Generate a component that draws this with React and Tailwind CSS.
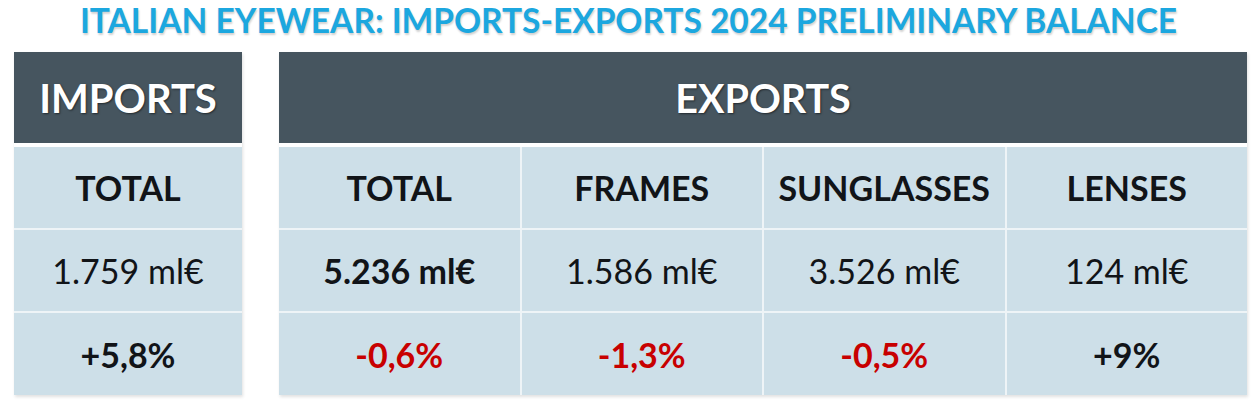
const FONT = { fontFamily: "Lato, 'Noto Sans', sans-serif" };

const CELL = "flex items-center justify-center bg-[#cddfe8] text-[#111418]";

function Cell({ children, className = "" }) {
  return <div className={`${CELL} ${className}`}>{children}</div>;
}

const exportsCols = [
  { label: "TOTAL", value: "5.236 ml€", strong: true, change: "-0,6%", down: true },
  { label: "FRAMES", value: "1.586 ml€", change: "-1,3%", down: true },
  { label: "SUNGLASSES", value: "3.526 ml€", change: "-0,5%", down: true },
  { label: "LENSES", value: "124 ml€", change: "+9%", down: false },
];

export default function App() {
  return (
    <div className="h-[405px] w-[1257px] bg-white" style={FONT}>
      <h1 className="h-[40px] pt-[1px] text-center text-[33.5px] font-bold leading-[38px] text-[#1ca7df] [text-shadow:1px_2px_2px_rgba(0,0,0,0.18)]">
        ITALIAN EYEWEAR: IMPORTS-EXPORTS 2024 PRELIMINARY BALANCE
      </h1>

      <div className="mt-[12px] flex gap-[37px] pl-[14px]">
        <div className="flex w-[228px] flex-col shadow-[1px_2px_3px_rgba(0,0,0,0.12)]">
          <div className="flex h-[91px] items-center justify-center bg-[#46555f] text-[40px] font-bold text-white [text-shadow:1px_1px_2px_rgba(0,0,0,0.5)]">
            IMPORTS
          </div>
          <div className="mt-[4px] grid grid-rows-[81px_81px_82px] gap-[2px] bg-[#eef4f7]">
            <Cell className="text-[34px] font-bold">TOTAL</Cell>
            <Cell className="text-[34px]">1.759 ml€</Cell>
            <Cell className="text-[34px] font-bold">+5,8%</Cell>
          </div>
        </div>

        <div className="flex w-[968px] flex-col shadow-[1px_2px_3px_rgba(0,0,0,0.12)]">
          <div className="flex h-[91px] items-center justify-center bg-[#46555f] text-[39.5px] font-bold text-white [text-shadow:1px_1px_2px_rgba(0,0,0,0.5)]">
            EXPORTS
          </div>
          <div className="mt-[4px] grid grid-flow-col grid-cols-4 grid-rows-[81px_81px_82px] gap-[2px] bg-[#eef4f7]">
            {exportsCols.map((col) => [
              <Cell key={`${col.label}-l`} className="text-[34px] font-bold">{col.label}</Cell>,
              <Cell key={`${col.label}-v`} className={`text-[34px] ${col.strong ? "font-bold" : ""}`}>{col.value}</Cell>,
              <Cell key={`${col.label}-c`} className={`text-[34px] font-bold ${col.down ? "text-[#c80000]" : ""}`}>{col.change}</Cell>,
            ])}
          </div>
        </div>
      </div>
    </div>
  );
}
